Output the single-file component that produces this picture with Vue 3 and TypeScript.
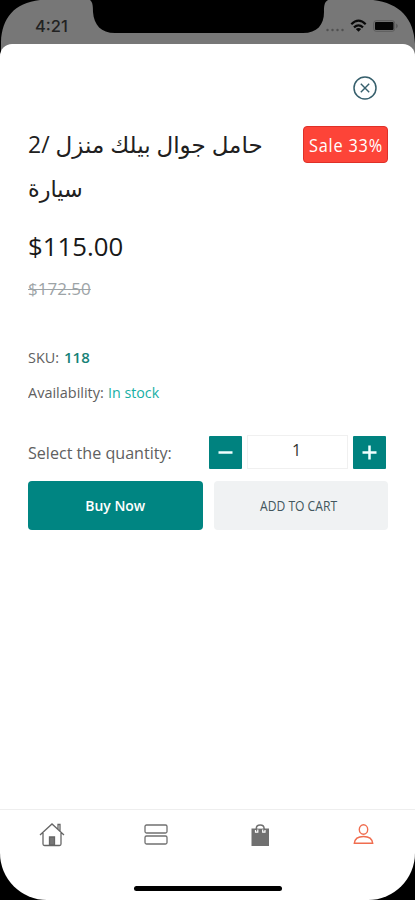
<script setup lang="ts">
import { ref } from 'vue'

const quantity = ref<number>(1)
const decrease = () => { if (quantity.value > 1) quantity.value-- }
const increase = () => { quantity.value++ }
</script>

<template>
  <div class="phone">
    <header class="status">
      <svg class="status-art" width="415" height="60" viewBox="0 0 415 60" aria-hidden="true">
        <path d="M1 60V42C2 18 14 3 40 0H90C93 2 93 8 93 12C94 25 101 33 115 33H303C317 33 324 25 324 12C324 7 324 2 328 0H373C400 3 414 19 415 44V60Z" fill="#777" />
        <g fill="#505050"><circle cx="327.500" cy="30" r="1.200" /><circle cx="332.500" cy="30" r="1.200" /><circle cx="337.500" cy="30" r="1.200" /><circle cx="342.500" cy="30" r="1.200" /></g>
        <g fill="none" stroke="#080808" stroke-width="2.200">
          <path d="M351.300 24.200Q358.500 17.200 365.700 24.200" />
          <path d="M354 27.400Q358.500 23.200 363 27.400" />
        </g>
        <path d="M355.800 29Q358.500 26.900 361.200 29L358.500 31.700Z" fill="#080808" />
        <rect x="373.700" y="20.700" width="21" height="10.600" rx="2.500" fill="none" stroke="#5c5c5c" />
        <rect x="375" y="22" width="18.500" height="8" rx="1" fill="#050505" />
        <path d="M396.300 23.500Q399 26 396.300 28.500Z" fill="#505050" />
      </svg>
      <span class="clock">4:21</span>
    </header>

    <main class="sheet">
      <div class="close-row">
        <button class="close" aria-label="Close">
          <svg width="24" height="24" viewBox="0 0 24 24" fill="none" stroke="#365f6c"><circle cx="12" cy="12" r="11" stroke-width="1.500" /><path d="M7.800 7.800L16.200 16.200M16.200 7.800L7.800 16.200" stroke-width="1.400" /></svg>
        </button>
      </div>

      <div class="heading">
        <h1 dir="rtl"><span class="line first">حامل جوال بيلك منزل /2</span><span class="line second">سيارة</span></h1>
        <span class="sale"><span>Sale 33%</span></span>
      </div>
      <div class="price"><span>$115.00</span></div>
      <div class="old-price"><span>$172.50</span></div>

      <div class="meta sku"><span class="label">SKU:</span><b>118</b></div>
      <div class="meta stock"><span class="label">Availability:</span><em>In stock</em></div>

      <div class="quantity">
        <span class="quantity-label">Select the quantity:</span>
        <button class="step" aria-label="Decrease" @click="decrease"><svg width="33" height="33" viewBox="0 0 33 33"><path d="M9.500 16.500H23.500" /></svg></button>
        <span class="amount">{{ quantity }}</span>
        <button class="step" aria-label="Increase" @click="increase"><svg width="33" height="33" viewBox="0 0 33 33"><path d="M9.500 16.500H23.500M16.500 9.500V23.500" /></svg></button>
      </div>
      <div class="actions">
        <button class="buy"><span>Buy Now</span></button>
        <button class="cart"><span>ADD TO CART</span></button>
      </div>
    </main>

    <nav class="tabs">
      <a class="tab"><svg width="26" height="26" viewBox="0 0 26 26" fill="none" stroke="#666" stroke-width="1.300"><path d="M1 13L13 2L25 13M4 11V22Q4 23.500 5.500 23.500H20.500Q22 23.500 22 22V11M19 7V2.500H21V9" /><path d="M10.500 23V15H15.500V23Z" fill="#777" /></svg></a>
      <a class="tab"><svg width="26" height="26" viewBox="0 0 26 26" fill="none" stroke="#707070" stroke-width="1.300"><rect x="2" y="3" width="22" height="8" rx="1.500" /><rect x="2" y="14" width="22" height="8" rx="1.500" /></svg></a>
      <a class="tab"><svg width="26" height="26" viewBox="0 0 26 26"><path d="M4.500 6.500H22V24H4.500Z" fill="#707070" /><path d="M9.300 10V6.500Q9.300 3 13.200 3T17.100 6.500V10" fill="none" stroke="#707070" stroke-width="1.500" /><path d="M11 6.300Q11 4.600 13.200 4.600T15.400 6.300Z" fill="#fff" /><g fill="none" stroke="#fff" stroke-width="1.200"><path d="M8.500 8V10.200H10.800V7.500M15.700 7.500V10.200H18V8" /></g></svg></a>
      <a class="tab"><svg width="26" height="26" viewBox="0 0 26 26" fill="none" stroke="#f06d4f" stroke-width="1.400"><ellipse cx="12.500" cy="7.500" rx="4.200" ry="4.800" /><path d="M3.300 21.300Q4 14.500 12.500 14.500T21.700 21.300Z" /></svg></a>
    </nav>
    <footer class="home-area"><i class="home-bar"></i></footer>
  </div>
</template>

<style>
body { background: #000; }
</style>

<style scoped>
* { box-sizing: border-box; }
button { border: 0; margin: 0; padding: 0; background: none; font-family: inherit; }
svg { display: block; }
.phone { position: relative; width: 415px; height: 900px; display: flex; flex-direction: column; background: #000; border-radius: 0 0 47px 47px; overflow: hidden; font-family: "Open Sans", "Noto Sans", "DejaVu Sans", sans-serif; }
.phone span { white-space: nowrap; }
.status { position: relative; height: 43.5px; flex: none; padding: 16px 0 0 35px; }
.status-art { position: absolute; top: 0; left: 0; }
.clock { position: relative; display: block; font: 500 16.500px/20px Inter, sans-serif; color: #222; }
.sheet { position: relative; flex: 1; background: #fff; border-radius: 12px 12px 0 0; padding: 32.5px 27px 0 28px; min-height: 0; }
.close-row { display: flex; justify-content: flex-end; padding-right: 11px; height: 47px; }
.close { width: 24px; height: 24px; }
.heading { display: flex; justify-content: space-between; align-items: flex-start; height: 101px; }
h1 { margin: 0; width: 235px; font-weight: 400; font-size: 23px; text-align: left; color: #202020; }
.line { display: block; height: 44px; line-height: 43px; width: max-content; margin-right: auto; transform-origin: left center; }
.second { transform: scaleX(.97); }
.sale { width: 85px; height: 37px; margin-top: 3px; border-radius: 4px; border: 1px solid #df3028; background: #fd4438; color: #fff; display: flex; align-items: center; justify-content: center; font-size: 18px; font-weight: 500; }
.sale span { letter-spacing: .9px; transform: scaleX(.905); margin-right: -1px; }
.price { height: 44px; line-height: 45px; font-size: 25px; color: #181818; }
.price span { transform: scaleX(1.03); }
.old-price { height: 40px; line-height: 41px; font-size: 17px; color: #9da4a7; }
.old-price span { text-decoration: line-through; text-decoration-thickness: 1px; }
.price span, .old-price span, .label, .quantity-label, .meta b, .meta em { display: inline-block; transform-origin: left center; }
.meta { display: flex; height: 35px; line-height: 35px; font-size: 15px; color: #606060; }
.sku { margin-top: 32px; }
.sku .label { width: 36px; transform: scaleX(.96); }
.stock .label { width: 80px; transform: scaleX(.965); }
.meta b { color: #168277; font-weight: 600; }
.meta em { font-style: normal; color: #16afa5; transform: scaleX(.95); }
.quantity { margin-top: 25px; height: 34px; display: flex; align-items: center; }
.quantity-label { width: 181px; font-size: 17px; color: #606060; transform: scaleX(.947); }
.step { width: 33px; height: 33px; background: #00827f; border-radius: 1px; overflow: hidden; }
.step path { stroke: #f1ffff; stroke-width: 2.500; }
.amount { width: 101px; height: 34px; margin: 0 5px; border: 1px solid #f0f0f0; text-align: center; line-height: 28px; font-size: 16px; color: #333; padding-right: 2px; }
.actions { display: flex; gap: 11px; margin-top: 12px; }
.actions button { height: 49px; border-radius: 4px; flex: 1; font-size: 15px; line-height: 49px; }
.actions button span { display: inline-block; }
.actions .buy { background: #008582; color: #fff; font-weight: 600; }
.buy span { transform: scaleX(.93); }
.actions .cart { background: #f0f2f3; color: #42565d; font-size: 14px; }
.cart span { transform: translateX(-2px) scaleX(.865); }
.tabs { height: 50px; flex: none; background: #fff; border-top: 1px solid #eee; display: grid; grid-template-columns: repeat(4, 104px); padding-top: 12px; }
.tab { display: flex; justify-content: center; }
.home-area { height: 41px; flex: none; background: #fff; display: flex; justify-content: center; padding-top: 27px; }
.home-bar { width: 148px; height: 5px; background: #000; border-radius: 3px; }
</style>
